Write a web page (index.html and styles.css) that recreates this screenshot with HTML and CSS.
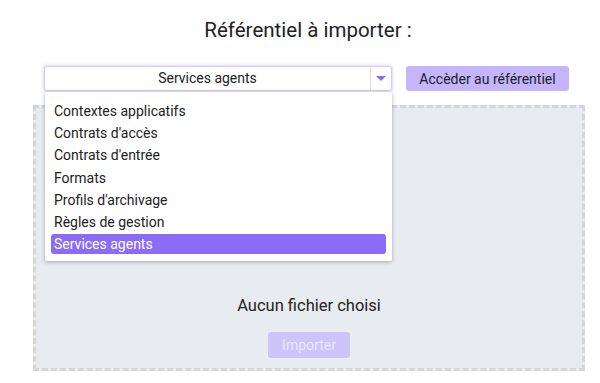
FILE: index.html
```html
<!DOCTYPE html>
<html>

<head>
    <link rel="stylesheet" href="styles.css">
</head>

<body>
    <div class="page">
        <h1 class="title">Référentiel à importer :</h1>
        <div class="toolbar">
            <div class="select">
                <span class="select-value">Services agents</span>
                <span class="select-arrow">
                    <svg width="10" height="6" viewBox="0 0 10 6"><path d="M0 0 L10 0 L5 5 Z" fill="#8b6cf7"/></svg>
                </span>
                <ul class="menu">
                    <li class="menu-item">Contextes applicatifs</li>
                    <li class="menu-item">Contrats d'accès</li>
                    <li class="menu-item">Contrats d'entrée</li>
                    <li class="menu-item">Formats</li>
                    <li class="menu-item">Profils d'archivage</li>
                    <li class="menu-item">Règles de gestion</li>
                    <li class="menu-item selected">Services agents</li>
                </ul>
            </div>
            <button class="btn">Accèder au référentiel</button>
        </div>
        <div class="dropzone">
            <p class="file-name">Aucun fichier choisi</p>
            <button class="btn btn-disabled">Importer</button>
        </div>
    </div>
</body>

</html>
```

FILE: styles.css
```css
* {
    padding: 0;
    margin: 0;
    box-sizing: border-box;
}

body {
    background: #fff;
    font-family: Roboto, 'Liberation Sans', sans-serif;
    color: #222;
}

.page {
    width: 552px;
    margin-left: 33px;
    padding-top: 17px;
}

.title {
    font-size: 20.5px;
    font-weight: normal;
    text-align: center;
    line-height: 26px;
    height: 49px;
    padding-right: 2px;
}

.toolbar {
    display: flex;
    align-items: center;
    gap: 14px;
    padding-left: 11px;
    height: 25px;
}

.select {
    position: relative;
    width: 348px;
    height: 25px;
    display: flex;
    border: 1px solid #d3cbf8;
    border-radius: 3px;
    box-shadow: 0 0 3px 1px rgba(167, 139, 250, 0.35);
    background: #fff;
}

.select-value {
    flex: 1;
    text-align: center;
    font-size: 14px;
    line-height: 23px;
}

.select-arrow {
    width: 21px;
    border-left: 1px solid #ddd;
    display: flex;
    align-items: center;
    justify-content: center;
}

.menu {
    position: absolute;
    left: 0;
    top: 25px;
    width: 347px;
    list-style: none;
    background: #fff;
    padding: 8px 6px 7px;
    border-radius: 2px;
    box-shadow: 0 1px 4px rgba(0, 0, 0, 0.3);
    z-index: 2;
}

.menu-item {
    font-size: 14px;
    line-height: 22.2px;
    padding-left: 3px;
}

.selected {
    background: #8b6cf7;
    color: #fff;
    border-radius: 3px;
    line-height: 20px;
    margin-top: 1px;
}

.btn {
    font-family: Roboto, 'Liberation Sans', sans-serif;
    font-size: 14px;
    color: #222;
    background: #c4b5fd;
    border: none;
    border-radius: 3px;
    height: 25px;
    width: 163px;
}

.dropzone {
    margin-top: 14px;
    height: 266px;
    background: #e8ebf0;
    border: 3px dashed #d6d6d6;
    display: flex;
    flex-direction: column;
    align-items: center;
    justify-content: flex-end;
    padding-bottom: 10px;
}

.file-name {
    font-size: 16.5px;
    line-height: 22px;
    margin-bottom: 15px;
}

.btn-disabled {
    width: 82px;
    height: 26px;
    background: #cdc4f9;
    color: #ebe7fd;
    font-size: 14px;
}
```
